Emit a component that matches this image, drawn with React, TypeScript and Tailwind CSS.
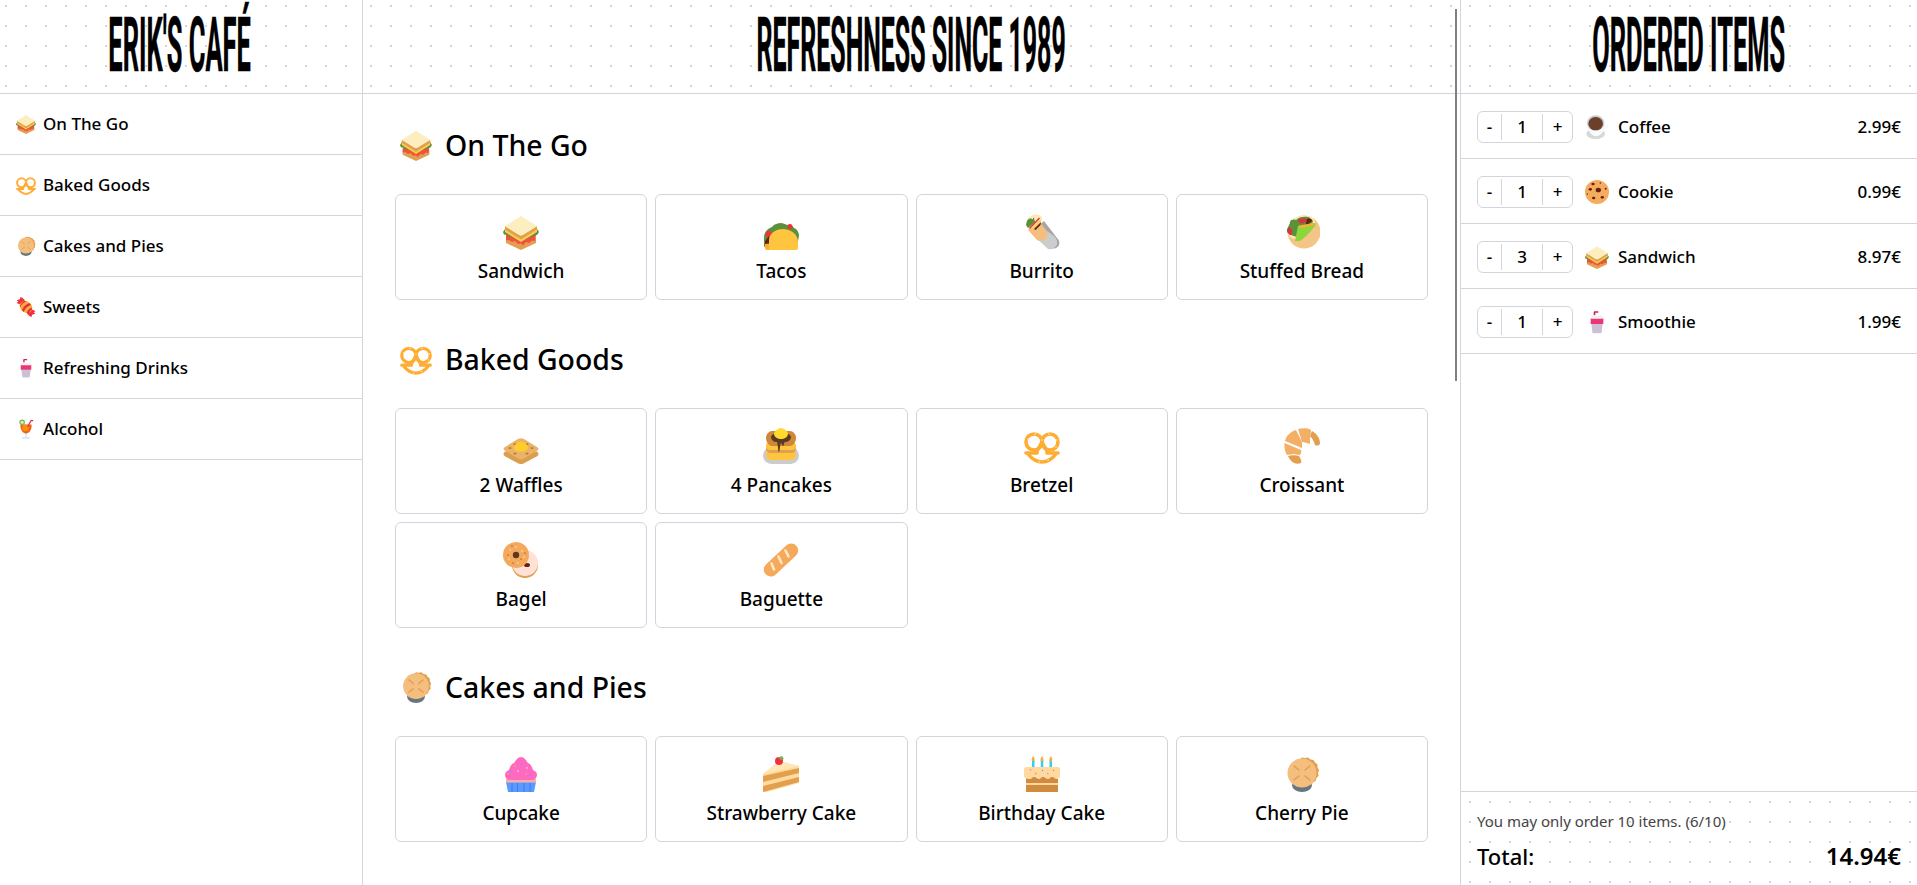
const dots = "bg-[radial-gradient(circle,#d4d4d8_1px,transparent_1.2px)] bg-[size:20px_20px]";
const titleFont = "font-['Roboto',sans-serif] font-bold text-[76px] leading-none uppercase whitespace-nowrap text-black [-webkit-text-stroke:0.5px_black]";

type EmojiProps = { name: string; className?: string };

// twemoji style drawings, all on a 36 box
const Emoji = ({ name, className }: EmojiProps) => {
  const art: Record<string, React.ReactNode> = {
    sandwich: (
      <>
        <path d="M3 24h30v5L18 36 3 29z" fill="#E29F4D" />
        <path d="M3 21h30l-1 6-3-.5-3 2.500-3-1-3 3.500-2-2-3 .5-3-3-3 1-3-2-3 .5z" fill="#F4503F" />
        <path d="M0 18l2-3 16 10 16-10 2 3-2 3-3 .5-3 2-3 0-3 2.500-3 1.500-3-2-3 0-3-2.500-3 0-3-2-3-.5z" fill="#5C913B" />
        <path d="M2 14 18 24l16-10v4L18 28 2 18z" fill="#FFCC4D" />
        <path d="M2 12 18 22l16-10v3.500L18 25.500 2 15.500z" fill="#E29F4D" />
        <path d="M18 2l16 10-16 10L2 12z" fill="#FDEEC0" />
      </>
    ),
    pretzel: (
      <>
        <g fill="none" stroke="#FFAC33" strokeWidth="3.600">
          <circle cx="10" cy="14" r="8" />
          <circle cx="26" cy="14" r="8" />
          <path d="M4 26c4 5 9 8 14 8s10-3 14-8" />
          <path d="M18 14l-6 11M18 14l6 11" />
          <path d="M2 25h11M23 25h11" strokeLinecap="round" />
        </g>
        <g fill="#FFE8B6">
          <circle cx="4" cy="11" r=".8" />
          <circle cx="11" cy="6" r=".8" />
          <circle cx="18" cy="12" r=".8" />
          <circle cx="25" cy="6" r=".8" />
          <circle cx="33" cy="12" r=".8" />
          <circle cx="32" cy="19" r=".8" />
          <circle cx="15" cy="34" r=".8" />
          <circle cx="24" cy="32" r=".8" />
        </g>
      </>
    ),
    pie: (
      <>
        <ellipse cx="18" cy="29" rx="10" ry="7" fill="#66757F" />
        <path d="M18 1l3 1 3-.5 2.500 2 3 .5 1.500 2.500 2.500 2 0 3 1.500 2.500-1 3 .5 3-2 2-1 3-2.500 1.500-2 2.500-3 0-3 1-3-1-3 0-2-2.500-2.500-1.500-1-3-2-2 .5-3-1-3 1.500-2.500 0-3 2.500-2 1.500-2.500 3-.5 2.500-2 3 .5z" fill="#E29F4D" />
        <circle cx="18" cy="17" r="14.500" fill="#F4BE7E" />
        <path d="M10 10l5 4M26 10l-5 4M10 24l5-4M26 24l-5-4" stroke="#E29F4D" strokeWidth="1.500" strokeLinecap="round" />
      </>
    ),
    candy: (
      <>
        <path d="M11 15 1 11l3-3-3-2 6-2 1-4 4 2 4 4zM25 21l10 4-3 3 3 2-6 2-1 4-4-2-4-4z" fill="#F4303F" />
        <ellipse cx="18" cy="18" rx="12" ry="10" transform="rotate(35 18 18)" fill="#FFAC33" />
        <path d="M7 16c2-5 5-8 9-9l3 1c-5 1-9 5-11 10zM11 24c2-6 7-11 13-13l3 3c-6 2-11 7-13 13zM19 29c1-4 5-8 9-10l1 4c-3 1-5 4-7 7z" fill="#DD2E44" />
      </>
    ),
    smoothie: (
      <>
        <path d="M13 8V3.500c0-1 .5-1.500 1.500-1.500H20v2h-4.500v4z" fill="#C7255C" />
        <path d="M9.500 20h17l-1.500 13c-.2 1.500-1 2-2 2H13c-1 0-1.800-.5-2-2z" fill="#CCC0D6" />
        <path d="M8.500 12h19v9h-19z" fill="#EA3774" />
        <path d="M10 8h16l1.500 5h-19z" fill="#F4F1F5" />
      </>
    ),
    cocktail: (
      <>
        <path d="M17 25h2v8h-2z" fill="#BBDDF5" />
        <path d="M11 33h14v2H11z" fill="#BBDDF5" />
        <path d="M8 10h20c1 9-4 16-10 16S7 19 8 10" fill="#F4601F" />
        <circle cx="17" cy="16" r="6" fill="#F4900C" />
        <circle cx="11" cy="6" r="5" fill="#77B255" />
        <circle cx="11" cy="6" r="3" fill="#D6F0A8" />
        <path d="M21 14 27 3h4" fill="none" stroke="#DD2E44" strokeWidth="2" />
      </>
    ),
    taco: (
      <>
        <path d="M1 33V24c0-7 5-10 8-11 2-3 6-4 9-4 2 0 4 1 6 2 3-1 6 1 7 3 3 1 5 4 5 8l-2 10H3z" fill="#5C913B" />
        <circle cx="5.500" cy="20" r="3" fill="#F4303F" />
        <circle cx="27" cy="12.500" r="2.500" fill="#F4303F" />
        <path d="M2 27v6h4V22z" fill="#662113" />
        <path d="M2 30v4c0 1 1 2 2 2h7v-7z" fill="#FFAC33" />
        <path d="M6 36v-9c0-8 7-12 14-12s15 5 15 13v6c0 1-1 2-2 2z" fill="#FFC53F" />
      </>
    ),
    burrito: (
      <>
        <path d="M13 13 26 33c3 3 8 1 9-2 1-3 0-5-2-7L20 7z" fill="#A6A6A6" />
        <path d="M8 20 24 35c3 1 8-1 9-5 1-3-1-6-3-8L16 12z" fill="#CCCCCC" />
        <path d="M4 16 13 26c3 2 7 1 9-2 2-2 2-6 0-8L14 6z" fill="#F4BE7E" />
        <path d="M2 12C1 9 4 3 7 2c3-2 8-2 10 0s1 6-2 9-9 4-11 3z" fill="#FFE8B6" />
        <path d="M3 7c1-2 3-3 5-2s0-2 2-1l1 4-7 6-2-3z" fill="#5C913B" />
        <path d="M5 14 15 3.500l1 1L6 15z" fill="#DD2E44" />
        <path d="M7 15 16.500 5.500l.5 2-8 8z" fill="#FFCC4D" />
        <path d="M10 15l7-7-.5 3-5 5z" fill="#662113" />
      </>
    ),
    flatbread: (
      <>
        <circle cx="20" cy="18" r="16.500" fill="#F4C587" />
        <path d="M5 22C1 16 8 3 16 2c7-1 14 1 15 6 1 3-12 16-18 17-3 0-6-1-8-3" fill="#FFE8B6" />
        <path d="M3 18c-1-3 3-7 3-10s5-3 6-2c2-3 8-4 12-3 3 1 5 3 5 5l-16 15c-3-1-8-2-10-5" fill="#5C913B" />
        <path d="M4 14c2-1 5 2 4 5s-2 2-3 1-2-4-1-6zM14 6c2-2 8-2 9 0s-2 2-4 3-5 0-5-3z" fill="#DD2E44" />
        <path d="M23 5c2-1 5 0 5 2l-7 6z" fill="#662113" />
        <path d="M11 27 14 12c6-1 12-3 17-3 1 1 1 2 0 3-4 5-10 12-15 15z" fill="#8CD63C" />
        <path d="M14 12l17-3 0 2-14 3z" fill="#FFAC33" />
      </>
    ),
    waffle: (
      <g transform="translate(0 8) scale(1 .78)">
        <path d="M18 36c-1 0-2-.5-3-1L2 26c-2-1.500-2-4 0-6h32c2 2 2 4.500 0 6l-13 9c-1 .5-2 1-3 1" fill="#D99E4E" />
        <path d="M15 4c2-1.500 4-1.500 6 0l13 10c2 1.500 2 3.500 0 5L21 29c-2 1.500-4 1.500-6 0L2 19c-2-1.500-2-3.500 0-5z" fill="#E9B36A" />
        <path d="M12 9l2 1.500-2 1.500-2-1.500zM24 9l2 1.500-2 1.500-2-1.500zM7 14l2 1.500-2 1.500-2-1.500zM29 14l2 1.500-2 1.500-2-1.500zM12 21l2 1.500-2 1.500-2-1.500zM24 21l2 1.500-2 1.500-2-1.500z" fill="#B97A2F" />
        <path d="M18 7c3 0 7 4 7 8s-4 5-7 5-7-1-7-5 4-8 7-8" fill="#FFCC2C" />
      </g>
    ),
    pancakes: (
      <>
        <rect x="0" y="19" width="36" height="17" rx="8.500" fill="#CCCCCC" />
        <rect x="3" y="22" width="30" height="10" rx="5" fill="#FFC53F" />
        <rect x="3" y="16" width="30" height="9" rx="4.500" fill="#E29F4D" />
        <rect x="3" y="14" width="30" height="8" rx="4" fill="#FFC53F" />
        <path d="M3 10c0-4 3-7 6-7h18c3 0 6 3 6 7s-3 8-6 8H9c-3 0-6-4-6-8" fill="#CE8838" />
        <path d="M8 9c0-3 7-5 10-5s10 2 10 5-3 5-6 5c-1 0-1 4-2 4s-1-3-2-3c-1 0-1 9-2 9s-1-8-2-10c-3 0-6-2-6-5" fill="#5B3A22" />
        <path d="M18 0c2 0 7 3 7 6s-4 5-7 5-7-2-7-5 5-6 7-6" fill="#FFD92C" />
      </>
    ),
    croissant: (
      <>
        <path d="M28 3c4 2 8 7 8 12 0 3-4 3-5 2-1-4-3-7-5-9z" fill="#E29F4D" />
        <path d="M14 1c5-1 11-1 13 1 0 3-1 6-1 14-3-1-6-2-8-2z" fill="#F4AF66" />
        <path d="M12 2l6 12 0 6L1 13c1-5 5-9 11-11" fill="#F4AF66" />
        <path d="M.5 15 17 22c1 3-1 5-2 5-2 0-3-1-5-1-2 0-5 1-7 1-2-3-3-7-2.500-12" fill="#F4AF66" />
        <path d="M4 28c3-1 8-1 11 0 2 3 3 6 2 7-2 1-5 1-7 0s-5-4-6-7" fill="#E29F4D" />
      </>
    ),
    bagel: (
      <>
        <circle cx="22" cy="23" r="13" fill="#E29F4D" />
        <circle cx="22" cy="21" r="13" fill="#FFE1D6" />
        <ellipse cx="24" cy="23" rx="3" ry="2" fill="#662113" />
        <circle cx="13" cy="13" r="13" fill="#F4A95C" />
        <circle cx="13" cy="13" r="3.200" fill="#5B3A22" />
        <g fill="#FFF0D8">
          <circle cx="7" cy="8" r=".7" />
          <circle cx="13" cy="5" r=".7" />
          <circle cx="19" cy="9" r=".7" />
          <circle cx="21" cy="15" r=".7" />
          <circle cx="6" cy="17" r=".7" />
          <circle cx="15" cy="21" r=".7" />
        </g>
        <g fill="#662113">
          <circle cx="5" cy="13" r=".6" />
          <circle cx="9" cy="4" r=".6" />
          <circle cx="18" cy="17" r=".6" />
          <circle cx="10" cy="21" r=".6" />
          <circle cx="22" cy="11" r=".6" />
        </g>
      </>
    ),
    baguette: (
      <>
        <rect x="-3" y="11" width="42" height="14" rx="7" fill="#F4A95C" transform="rotate(-43 18 18)" />
        <path d="M8.500 21.500l2.500 6M15.500 14.500l3 6.500M22.500 8.500l3 6" stroke="#FFE8C4" strokeWidth="2.600" strokeLinecap="round" />
      </>
    ),
    cupcake: (
      <>
        <path d="M3 26h30l-2 10H5z" fill="#5C9AFF" />
        <path d="M9 27v9M14.500 27v9M21 27v9M27 27v9" stroke="#3B7CF0" strokeWidth="1" />
        <path d="M3 23h30v3.500H3z" fill="#F7B0B0" />
        <path d="M18 1c3 0 5 3 7 6 3 1 4 4 5 7 3 1 4 3 4 5s-2 5-4 5H6c-2 0-4-3-4-5s1-4 4-5c1-3 2-6 5-7 2-3 4-6 7-6" fill="#FF69C0" />
        <g fill="#FFCC4D">
          <circle cx="12" cy="10" r=".7" />
          <circle cx="23" cy="18" r=".7" />
          <circle cx="5" cy="18" r=".7" />
        </g>
        <g fill="#5C9AFF">
          <circle cx="18" cy="8" r=".7" />
          <circle cx="8" cy="15" r=".7" />
          <circle cx="27" cy="19" r=".7" />
        </g>
        <g fill="#FFFFFF">
          <circle cx="24" cy="12" r=".7" />
          <circle cx="15" cy="15" r=".7" />
        </g>
      </>
    ),
    cake: (
      <>
        <path d="M0 18 16 5l20 5v17L0 37z" fill="#FFDC9E" />
        <path d="M0 20l36-8v5L0 26zM0 30l36-9v5L0 36z" fill="#E29F4D" />
        <path d="M0 18 16 5l20 5z" fill="#FFE8B6" />
        <circle cx="16" cy="5" r="4" fill="#F4303F" />
        <path d="M15 1.500l4-1.500 2 3-3 1z" fill="#77B255" />
      </>
    ),
    birthday: (
      <>
        <path d="M2 21h32v15H2z" fill="#D08B3F" />
        <path d="M2 27h32v2H2z" fill="#FFD9A0" />
        <path d="M0 13c0-1 1-2 2-2h32c1 0 2 1 2 2v7c0 2-1 3-3 3-2 0-3-2-5-2s-2 2-4 2-3-2-5-2-2 2-4 2-3-2-5-2-2 2-4 2c-3 0-6-1-6-3z" fill="#FFD9A0" />
        <path d="M8 4h2.500v7H8zM16.800 4h2.500v7h-2.500zM25.500 4h2.500v7h-2.500z" fill="#2ED2F0" />
        <path d="M9.200 0c1 1.500 1.500 2.500 1.500 3.500s-.5 1.500-1.500 1.500-1.500-.5-1.500-1.500S8.200 1.500 9.200 0M18 0c1 1.500 1.500 2.500 1.500 3.500S19 5 18 5s-1.500-.5-1.500-1.500S17 1.500 18 0M26.800 0c1 1.500 1.500 2.500 1.500 3.500S27.800 5 26.800 5s-1.500-.5-1.500-1.500S25.800 1.500 26.800 0" fill="#FFAC33" />
        <path d="M11 18l1.500-1M29 15l1-1" stroke="#F4700C" strokeWidth="1" />
        <path d="M6 13l1 1.500M23 17l1.500 1" stroke="#FF69C0" strokeWidth="1" />
        <path d="M18 14l1 1" stroke="#2090E0" strokeWidth="1" />
      </>
    ),
    coffee: (
      <>
        <ellipse cx="16" cy="28" rx="14" ry="8" fill="#D5D9DC" />
        <path d="M2 14C2 7 9 1 16 1s14 6 14 13c2 0 5 1 5 3 0 3-4 5-7 6-2 5-7 9-12 9S4 24 2 14" fill="#F8FAFB" />
        <ellipse cx="16" cy="12" rx="13" ry="11.500" fill="#C8CDD0" />
        <ellipse cx="16" cy="13" rx="11" ry="10" fill="#6B3F2A" />
      </>
    ),
    cookie: (
      <>
        <circle cx="18" cy="18" r="18" fill="#F4AC5E" />
        <g fill="#662113">
          <ellipse cx="12" cy="6" rx="2.500" ry="2" />
          <circle cx="23" cy="4.500" r="1.200" />
          <ellipse cx="8" cy="14" rx="2.500" ry="2" />
          <ellipse cx="20" cy="15" rx="4" ry="3.500" />
          <circle cx="31" cy="13" r="1.500" />
          <circle cx="3.500" cy="21" r="1" />
          <ellipse cx="13" cy="27" rx="2.500" ry="2" />
          <ellipse cx="26" cy="26" rx="2.500" ry="2" />
        </g>
      </>
    ),
  };
  return (
    <svg viewBox="0 0 36 36" className={className} aria-hidden="true">
      {art[name]}
    </svg>
  );
};

const categories = [
  { name: "On The Go", emoji: "sandwich" },
  { name: "Baked Goods", emoji: "pretzel" },
  { name: "Cakes and Pies", emoji: "pie" },
  { name: "Sweets", emoji: "candy" },
  { name: "Refreshing Drinks", emoji: "smoothie" },
  { name: "Alcohol", emoji: "cocktail" },
];

const sections = [
  {
    name: "On The Go",
    emoji: "sandwich",
    items: [
      { name: "Sandwich", emoji: "sandwich" },
      { name: "Tacos", emoji: "taco" },
      { name: "Burrito", emoji: "burrito" },
      { name: "Stuffed Bread", emoji: "flatbread" },
    ],
  },
  {
    name: "Baked Goods",
    emoji: "pretzel",
    items: [
      { name: "2 Waffles", emoji: "waffle" },
      { name: "4 Pancakes", emoji: "pancakes" },
      { name: "Bretzel", emoji: "pretzel" },
      { name: "Croissant", emoji: "croissant" },
      { name: "Bagel", emoji: "bagel" },
      { name: "Baguette", emoji: "baguette" },
    ],
  },
  {
    name: "Cakes and Pies",
    emoji: "pie",
    items: [
      { name: "Cupcake", emoji: "cupcake" },
      { name: "Strawberry Cake", emoji: "cake" },
      { name: "Birthday Cake", emoji: "birthday" },
      { name: "Cherry Pie", emoji: "pie" },
    ],
  },
];

const orders = [
  { name: "Coffee", emoji: "coffee", qty: 1, price: "2.99€" },
  { name: "Cookie", emoji: "cookie", qty: 1, price: "0.99€" },
  { name: "Sandwich", emoji: "sandwich", qty: 3, price: "8.97€" },
  { name: "Smoothie", emoji: "smoothie", qty: 1, price: "1.99€" },
];

const Stepper = ({ qty }: { qty: number }) => (
  <div className="flex h-8 w-24 shrink-0 items-center rounded-md border border-[#d4d4dd] text-[17px]">
    <span className="flex h-[26px] w-6 items-center justify-center border-r border-[#d4d4dd]">-</span>
    <span className="flex h-[26px] flex-1 items-center justify-center border-r border-[#d4d4dd]">{qty}</span>
    <span className="flex h-[26px] w-[29px] items-center justify-center">+</span>
  </div>
);

export default function App() {
  return (
    <div className="flex h-screen overflow-hidden bg-white font-['Noto_Sans',sans-serif] text-black">
      <aside className="w-[363px] shrink-0 border-r border-[#d4d4dd]">
        <header className={`flex h-[94px] items-center justify-center border-b border-[#d4d4dd] pt-1 pr-[3px] pb-2 ${dots} bg-[position:-4px_-4px]`}>
          <h1 className={`${titleFont} scale-x-[0.335]`}>Erik's Café</h1>
        </header>
        <nav>
          {categories.map((c) => (
            <div key={c.name} className="flex h-[61px] items-center gap-[7px] border-b border-[#d4d4dd] pl-4 text-[17px] font-medium">
              <Emoji name={c.emoji} className="size-5" />
              <span>{c.name}</span>
            </div>
          ))}
        </nav>
      </aside>

      <main className="relative flex min-w-0 flex-1 flex-col">
        <header className={`flex h-[94px] shrink-0 items-center justify-center border-b border-[#d4d4dd] pt-1 pb-2 ${dots} bg-[position:-2px_-4px]`}>
          <h1 className={`${titleFont} scale-x-[0.328]`}>Refreshness Since 1989</h1>
        </header>
        <div className="flex-1 overflow-hidden px-8 pt-8">
          {sections.map((s) => (
            <section key={s.name} className="mb-10">
              <h2 className="mb-7 flex h-10 items-center gap-[13px] pb-[2px] text-[28.4px] font-medium">
                <Emoji name={s.emoji} className="ml-[5px] size-8" />
                <span>{s.name}</span>
              </h2>
              <div className="grid grid-cols-4 gap-2">
                {s.items.map((item) => (
                  <div key={item.name} className="flex h-[106px] flex-col items-center rounded-md border border-[#d4d4dd] pt-[19px]">
                    <Emoji name={item.emoji} className="size-9" />
                    <span className="mt-[9px] text-[19px] leading-6 font-medium">{item.name}</span>
                  </div>
                ))}
              </div>
            </section>
          ))}
        </div>
        <div className="absolute top-[9px] right-[3px] h-[372px] w-0.5 bg-[#808080]" />
      </main>

      <aside className="flex w-[457px] shrink-0 flex-col border-l border-[#d4d4dd]">
        <header className={`flex h-[94px] shrink-0 items-center justify-center border-b border-[#d4d4dd] pt-1 pb-2 ${dots} bg-[position:-1px_-4px]`}>
          <h1 className={`${titleFont} scale-x-[0.334]`}>Ordered Items</h1>
        </header>
        <div className="flex-1">
          {orders.map((o) => (
            <div key={o.name} className="flex h-[65px] items-center border-b border-[#d4d4dd] pt-px px-4 text-[17px] font-medium">
              <Stepper qty={o.qty} />
              <Emoji name={o.emoji} className="ml-3 size-6" />
              <span className="ml-[9px]">{o.name}</span>
              <span className="ml-auto">{o.price}</span>
            </div>
          ))}
        </div>
        <footer className={`h-[94px] shrink-0 border-t border-[#d4d4dd] px-4 pt-[19px] ${dots} bg-[position:-1px_0px]`}>
          <p className="text-[15px] leading-5 text-[#444444]">You may only order 10 items. (6/10)</p>
          <div className="mt-[9px] flex items-center justify-between text-[22px] leading-8">
            <span className="font-medium">Total:</span>
            <span className="text-2xl font-semibold">14.94€</span>
          </div>
        </footer>
      </aside>
    </div>
  );
}
